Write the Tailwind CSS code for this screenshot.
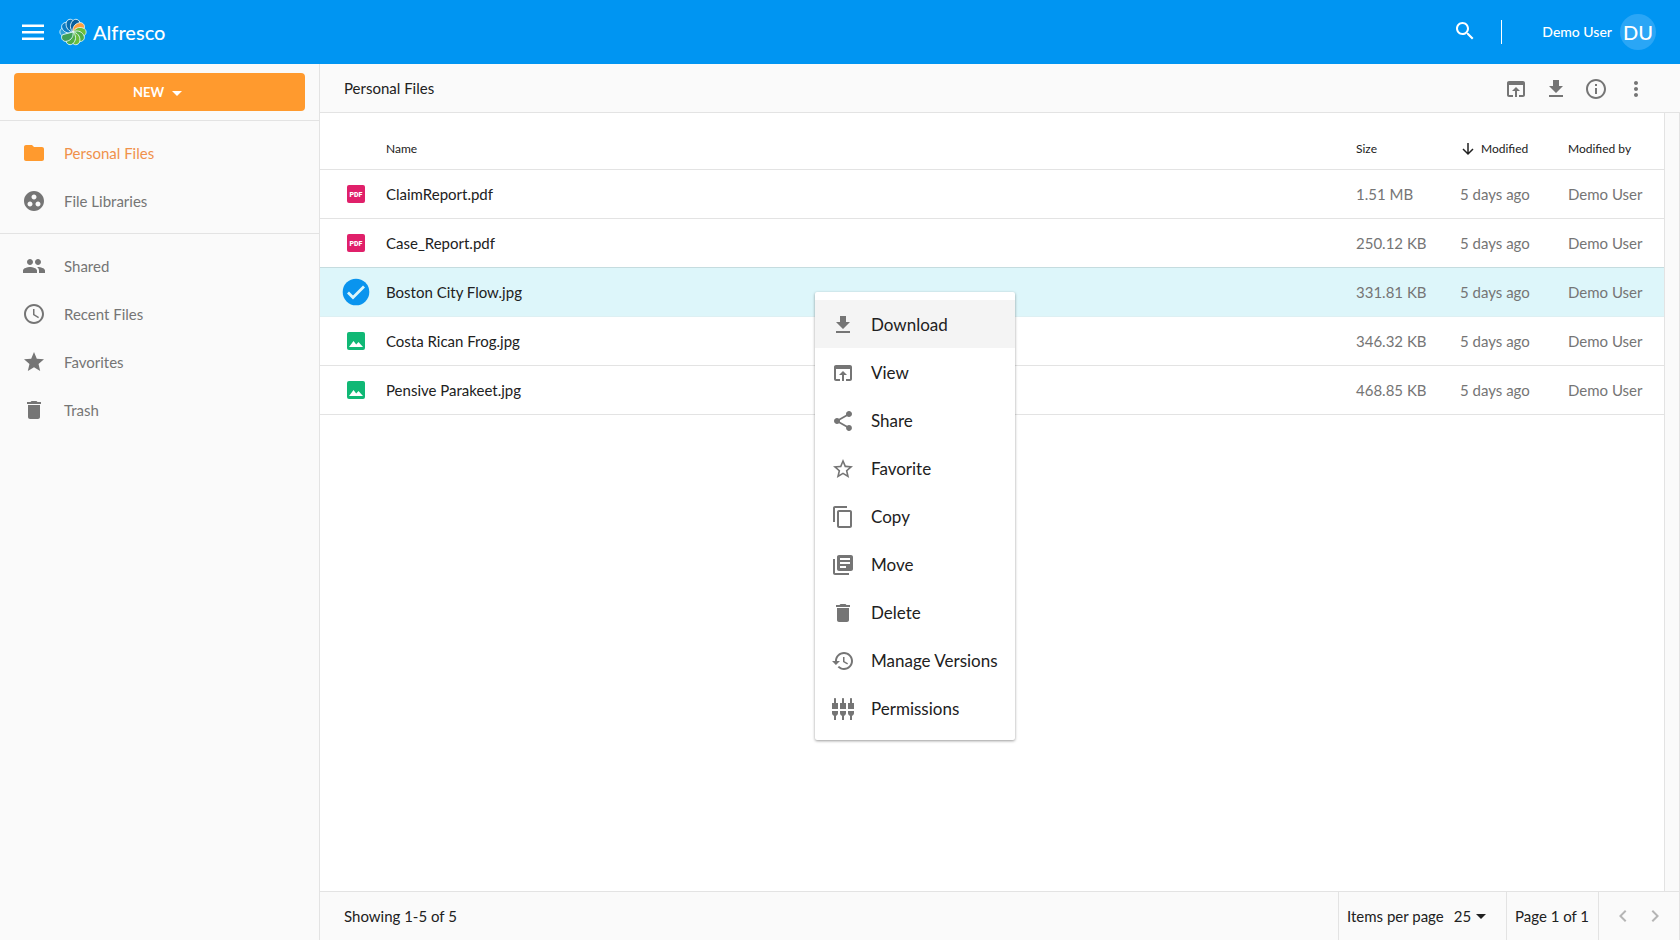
<!DOCTYPE html>
<html lang="en">
<head>
<meta charset="utf-8">
<meta name="viewport" content="width=device-width, initial-scale=1">
<title>Alfresco - Personal Files</title>
<script src="https://cdn.jsdelivr.net/npm/@tailwindcss/browser@4"></script>
</head>
<body class="flex h-screen flex-col overflow-hidden bg-white font-['Lato',sans-serif] text-[15px] text-[#212121]">
<svg class="hidden" aria-hidden="true">
  <symbol id="download" viewBox="0 0 24 24"><path d="M19 9h-4V3H9v6H5l7 7 7-7zM5 18v2h14v-2H5z"/></symbol>
  <symbol id="open" viewBox="0 0 24 24"><path d="M19 4H5c-1.110 0-2 .9-2 2v12c0 1.100.890 2 2 2h4v-2H5V8h14v10h-4v2h4c1.100 0 2-.9 2-2V6c0-1.100-.890-2-2-2zm-7 6l-4 4h3v6h2v-6h3l-4-4z"/></symbol>
  <symbol id="trash" viewBox="0 0 24 24"><path d="M6 19c0 1.100.9 2 2 2h8c1.100 0 2-.9 2-2V7H6v12zM19 4h-3.500l-1-1h-5l-1 1H5v2h14V4z"/></symbol>
  <symbol id="caret" viewBox="0 0 10 5"><path d="M0 0h10L5 5z"/></symbol>
  <symbol id="pdf" viewBox="0 0 24 24"><rect x="3" y="3" width="18" height="18" rx="2" fill="#e0206a"/><text x="12" y="14.500" text-anchor="middle" font-family="Roboto, sans-serif" font-weight="900" font-size="7" fill="#fff">PDF</text></symbol>
  <symbol id="image" viewBox="0 0 24 24"><rect x="3" y="3" width="18" height="18" rx="2" fill="#10b875"/><path fill="#fff" d="M5 18l4.500-6 2.700 3.600L14.500 13 19 18z"/></symbol>
  <path id="petal" d="M0 0C-4-2-5.500-6-4-10C-2.800-14.200 3-14.200 4-10Z"/>
</svg>

<header class="flex h-16 shrink-0 items-center bg-[#0095f2] pr-6 pl-[21px] text-white">
  <button type="button" aria-label="Toggle menu"><svg class="h-6 w-6" viewBox="0 0 24 24" fill="currentColor"><path d="M1 4.500h22v2.600H1zM1 11h22v2.600H1zM1 17.500h22V20H1z"/></svg></button>
  <a href="#" class="ml-[14px] flex items-center gap-[6px] text-[20px] leading-7 font-medium">
    <svg class="h-7 w-7" viewBox="-14 -14 28 28" stroke="#e8fbff" stroke-width=".8" stroke-linejoin="round" aria-hidden="true">
      <use href="#petal" fill="#2d9fd8" transform="rotate(270)"/>
      <use href="#petal" fill="#0a7cc4" transform="rotate(306)"/>
      <use href="#petal" fill="#0a6cae" transform="rotate(342)"/>
      <use href="#petal" fill="#0a5f9c" transform="rotate(18)"/>
      <use href="#petal" fill="#ff9f3f" transform="rotate(54)"/>
      <use href="#petal" fill="#6cbf3a" transform="rotate(90)"/>
      <use href="#petal" fill="#4fae48" transform="rotate(126)"/>
      <use href="#petal" fill="#6cbf3a" transform="rotate(162)"/>
      <use href="#petal" fill="#4fae48" transform="rotate(198)"/>
      <use href="#petal" fill="#3f9f5a" transform="rotate(234)"/>
    </svg>
    <span>Alfresco</span>
  </a>
  <button type="button" aria-label="Search" class="ml-auto pb-0.5"><svg class="h-6 w-6" viewBox="0 0 24 24" fill="currentColor"><path d="M15.500 14h-.790l-.280-.270C15.410 12.590 16 11.110 16 9.500 16 5.910 13.090 3 9.500 3S3 5.910 3 9.500 5.910 16 9.500 16c1.610 0 3.090-.590 4.230-1.570l.270.280v.790l5 4.990L20.490 19l-4.990-5zm-6 0C7.010 14 5 11.990 5 9.500S7.010 5 9.500 5 14 7.010 14 9.500 11.990 14 9.500 14z"/></svg></button>
  <div class="ml-6 h-6 w-px bg-white"></div>
  <button type="button" class="ml-10 flex items-center gap-2"><span class="text-sm font-medium">Demo User</span><span class="flex h-9 w-9 items-center justify-center rounded-full bg-[#2aa6f6] text-[20px] font-medium">DU</span></button>
</header>

<div class="flex min-h-0 flex-1">
  <aside class="w-80 shrink-0 border-r border-[#e3e3e3] bg-[#fafafa] text-[#757575]">
    <div class="border-b border-[#e3e3e3] px-[14px] pt-[9px] pb-[9px]">
      <button type="button" class="flex h-[38px] w-full items-center justify-center gap-2 rounded bg-[#ff9a2e] pt-0.5 pr-1 text-[13px] font-bold text-white">NEW <svg class="h-[5px] w-[10px]" fill="currentColor"><use href="#caret"/></svg></button>
    </div>
    <nav>
      <div class="border-b border-[#e3e3e3] py-2">
        <a href="#" class="flex h-12 items-center gap-[18px] px-[22px] text-[#f0914a]"><svg class="h-6 w-6" viewBox="0 0 24 24" fill="#ff9a2e"><path d="M10 4H4c-1.100 0-1.990.9-1.990 2L2 18c0 1.100.9 2 2 2h16c1.100 0 2-.9 2-2V8c0-1.100-.9-2-2-2h-8l-2-2z"/></svg>Personal Files</a>
        <a href="#" class="flex h-12 items-center gap-[18px] px-[22px]"><svg class="h-6 w-6" viewBox="0 0 24 24" fill="currentColor"><path d="M12 2C6.480 2 2 6.480 2 12s4.480 10 10 10 10-4.480 10-10S17.520 2 12 2zM8 17.500c-1.380 0-2.500-1.120-2.500-2.500s1.120-2.500 2.500-2.500 2.500 1.120 2.500 2.500-1.120 2.500-2.500 2.500zM9.500 8c0-1.380 1.120-2.500 2.500-2.500s2.500 1.120 2.500 2.500-1.120 2.500-2.500 2.500S9.500 9.380 9.500 8zm6.500 9.500c-1.380 0-2.500-1.120-2.500-2.500s1.120-2.500 2.500-2.500 2.500 1.120 2.500 2.500-1.120 2.500-2.500 2.500z"/></svg>File Libraries</a>
      </div>
      <div class="py-2">
        <a href="#" class="flex h-12 items-center gap-[18px] px-[22px]"><svg class="h-6 w-6" viewBox="0 0 24 24" fill="currentColor"><path d="M16 11c1.660 0 2.990-1.340 2.990-3S17.660 5 16 5c-1.660 0-3 1.340-3 3s1.340 3 3 3zm-8 0c1.660 0 2.990-1.340 2.990-3S9.660 5 8 5C6.340 5 5 6.340 5 8s1.340 3 3 3zm0 2c-2.330 0-7 1.170-7 3.500V19h14v-2.500c0-2.330-4.670-3.500-7-3.500zm8 0c-.290 0-.620.020-.970.050 1.160.840 1.970 1.970 1.970 3.450V19h6v-2.500c0-2.330-4.670-3.500-7-3.500z"/></svg>Shared</a>
        <a href="#" class="flex h-12 items-center gap-[18px] px-[22px]"><svg class="h-6 w-6" viewBox="0 0 24 24" fill="currentColor"><path d="M11.990 2C6.470 2 2 6.480 2 12s4.470 10 9.990 10C17.520 22 22 17.520 22 12S17.520 2 11.990 2zM12 20c-4.420 0-8-3.580-8-8s3.580-8 8-8 8 3.580 8 8-3.580 8-8 8zm.5-13H11v6l5.250 3.150.750-1.230-4.500-2.670z"/></svg>Recent Files</a>
        <a href="#" class="flex h-12 items-center gap-[18px] px-[22px]"><svg class="h-6 w-6" viewBox="0 0 24 24" fill="currentColor"><path d="M12 17.270L18.180 21l-1.640-7.030L22 9.240l-7.190-.610L12 2 9.190 8.630 2 9.240l5.460 4.730L5.820 21z"/></svg>Favorites</a>
        <a href="#" class="flex h-12 items-center gap-[18px] px-[22px]"><svg class="h-6 w-6" fill="currentColor"><use href="#trash"/></svg>Trash</a>
      </div>
    </nav>
  </aside>

  <main class="flex min-w-0 flex-1 flex-col">
    <div class="flex h-[49px] shrink-0 items-center border-b border-[#e3e3e3] bg-[#fafafa] pr-8 pl-6">
      <h1 class="mr-auto">Personal Files</h1>
      <div class="flex gap-4 pt-0.5 text-[#757575]">
        <button type="button" aria-label="View"><svg class="h-6 w-6" fill="currentColor"><use href="#open"/></svg></button>
        <button type="button" aria-label="Download"><svg class="h-6 w-6" fill="currentColor"><use href="#download"/></svg></button>
        <button type="button" aria-label="Details"><svg class="h-6 w-6" viewBox="0 0 24 24" fill="currentColor"><path d="M11 17h2v-6h-2v6zm1-15C6.480 2 2 6.480 2 12s4.480 10 10 10 10-4.480 10-10S17.520 2 12 2zm0 18c-4.410 0-8-3.590-8-8s3.590-8 8-8 8 3.590 8 8-3.590 8-8 8zM11 9h2V7h-2v2z"/></svg></button>
        <button type="button" aria-label="More actions"><svg class="h-6 w-6" viewBox="0 0 24 24" fill="currentColor"><path d="M12 8c1.100 0 2-.9 2-2s-.9-2-2-2-2 .9-2 2 .9 2 2 2zm0 2c-1.100 0-2 .9-2 2s.9 2 2 2 2-.9 2-2-.9-2-2-2zm0 6c-1.100 0-2 .9-2 2s.9 2 2 2 2-.9 2-2-.9-2-2-2z"/></svg></button>
      </div>
    </div>

    <div class="flex min-h-0 flex-1 bg-[#fafafa]">
      <div class="min-w-0 flex-1 bg-white">
        <table class="w-full table-fixed border-separate border-spacing-0 text-left">
          <colgroup><col class="w-[66px]"><col><col class="w-[104px]"><col class="w-[108px]"><col class="w-24"></colgroup>
          <thead class="text-xs">
            <tr class="h-[57px] *:border-b *:border-[#e3e3e3] *:pt-4 *:font-normal">
              <th aria-label="Type"></th><th>Name</th><th>Size</th>
              <th aria-sort="descending"><span class="flex items-center gap-[5px]"><svg class="h-4 w-4" viewBox="0 0 16 16" fill="none" stroke="currentColor" stroke-width="1.500"><path d="M8 2v11M3 8l5 5 5-5"/></svg>Modified</span></th>
              <th>Modified by</th>
            </tr>
          </thead>
          <tbody class="text-[#757575]">
            <tr class="h-[49px] *:border-b *:border-[#e3e3e3]"><td class="pl-6"><svg class="h-6 w-6"><use href="#pdf"/></svg></td><td class="text-[#212121]">ClaimReport.pdf</td><td>1.51 MB</td><td>5 days ago</td><td>Demo User</td></tr>
            <tr class="h-[49px] *:border-b *:border-[#c5dcdf]"><td class="pl-6"><svg class="h-6 w-6"><use href="#pdf"/></svg></td><td class="text-[#212121]">Case_Report.pdf</td><td>250.12 KB</td><td>5 days ago</td><td>Demo User</td></tr>
            <tr class="h-[49px] bg-[#ddf6fa] *:border-b *:border-[#ddf0f3]" aria-selected="true"><td class="pl-[22px]"><svg class="h-7 w-7" viewBox="0 0 28 28"><circle cx="14" cy="14" r="13.300" fill="#0a94ee"/><path d="M6 14.500l5 5L22 8.500" fill="none" stroke="#ddf6fa" stroke-width="2.800"/></svg></td><td class="text-[#212121]">Boston City Flow.jpg</td><td>331.81 KB</td><td>5 days ago</td><td>Demo User</td></tr>
            <tr class="h-[49px] *:border-b *:border-[#e3e3e3]"><td class="pl-6"><svg class="h-6 w-6"><use href="#image"/></svg></td><td class="text-[#212121]">Costa Rican Frog.jpg</td><td>346.32 KB</td><td>5 days ago</td><td>Demo User</td></tr>
            <tr class="h-[49px] *:border-b *:border-[#e3e3e3]"><td class="pl-6"><svg class="h-6 w-6"><use href="#image"/></svg></td><td class="text-[#212121]">Pensive Parakeet.jpg</td><td>468.85 KB</td><td>5 days ago</td><td>Demo User</td></tr>
          </tbody>
        </table>
      </div>
      <div class="w-4 border-x border-[#e3e3e3]"></div>
    </div>

    <footer class="flex h-[49px] shrink-0 items-stretch border-t border-r border-[#e3e3e3] bg-[#fafafa]">
      <div class="mr-auto flex items-center pl-6">Showing 1-5 of 5</div>
      <div class="flex w-[168px] items-center border-l border-[#e3e3e3] pl-2">
        <label for="page-size">Items per page</label>
        <div class="ml-[10px] grid items-center">
          <select id="page-size" class="col-start-1 row-start-1 w-8 appearance-none bg-transparent"><option>25</option><option>50</option><option>100</option></select>
          <svg class="pointer-events-none col-start-1 row-start-1 h-[5px] w-[10px] justify-self-end" fill="currentColor"><use href="#caret"/></svg>
        </div>
      </div>
      <div class="flex w-[92px] items-center border-l border-[#e3e3e3] pl-2">Page 1 of 1</div>
      <div class="flex w-[81px] items-center gap-2 border-l border-[#e3e3e3] pl-3 text-[#b5b5b5]">
        <button type="button" disabled aria-label="Previous page"><svg class="h-6 w-6" viewBox="0 0 24 24" fill="currentColor"><path d="M15.410 7.410L14 6l-6 6 6 6 1.410-1.410L10.830 12z"/></svg></button>
        <button type="button" disabled aria-label="Next page"><svg class="h-6 w-6" viewBox="0 0 24 24" fill="currentColor"><path d="M10 6L8.590 7.410 13.170 12l-4.580 4.590L10 18l6-6z"/></svg></button>
      </div>
    </footer>
  </main>
</div>

<div role="menu" class="absolute top-[292px] left-[815px] w-[200px] rounded-xs bg-white py-2 text-[17px] shadow-[0_1px_3px_rgba(0,0,0,0.4)] *:flex *:h-12 *:w-full *:items-center *:gap-4 *:pt-0.5 *:pl-4">
  <button type="button" role="menuitem" class="bg-[#f4f4f4]"><svg class="h-6 w-6" fill="#757575"><use href="#download"/></svg>Download</button>
  <button type="button" role="menuitem"><svg class="h-6 w-6" fill="#757575"><use href="#open"/></svg>View</button>
  <button type="button" role="menuitem"><svg class="h-6 w-6" viewBox="0 0 24 24" fill="#757575"><path d="M18 16.080c-.760 0-1.440.3-1.960.770L8.910 12.700c.050-.230.090-.460.090-.7s-.040-.470-.090-.7l7.050-4.110c.540.5 1.250.810 2.040.810 1.660 0 3-1.340 3-3s-1.340-3-3-3-3 1.340-3 3c0 .240.040.470.090.7L8.040 9.810C7.500 9.310 6.790 9 6 9c-1.660 0-3 1.340-3 3s1.340 3 3 3c.790 0 1.500-.310 2.040-.810l7.120 4.160c-.050.210-.080.430-.080.650 0 1.610 1.310 2.920 2.920 2.920s2.920-1.310 2.920-2.920-1.310-2.920-2.920-2.920z"/></svg>Share</button>
  <button type="button" role="menuitem"><svg class="h-6 w-6" viewBox="0 0 24 24" fill="#757575"><path d="M22 9.240l-7.190-.620L12 2 9.190 8.630 2 9.240l5.460 4.730L5.820 21 12 17.270 18.180 21l-1.630-7.030L22 9.240zM12 15.400l-3.760 2.270 1-4.280-3.320-2.880 4.380-.380L12 6.100l1.710 4.040 4.380.380-3.320 2.880 1 4.280L12 15.400z"/></svg>Favorite</button>
  <button type="button" role="menuitem"><svg class="h-6 w-6" viewBox="0 0 24 24" fill="#757575"><path d="M16 1H4c-1.100 0-2 .9-2 2v14h2V3h12V1zm3 4H8c-1.100 0-2 .9-2 2v14c0 1.100.9 2 2 2h11c1.100 0 2-.9 2-2V7c0-1.100-.9-2-2-2zm0 16H8V7h11v14z"/></svg>Copy</button>
  <button type="button" role="menuitem"><svg class="h-6 w-6" viewBox="0 0 24 24" fill="#757575"><path d="M4 6H2v14c0 1.100.9 2 2 2h14v-2H4V6zm16-4H8c-1.100 0-2 .9-2 2v12c0 1.100.9 2 2 2h12c1.100 0 2-.9 2-2V4c0-1.100-.9-2-2-2zm-1 9H9V9h10v2zm-4 4H9v-2h6v2zm4-8H9V5h10v2z"/></svg>Move</button>
  <button type="button" role="menuitem"><svg class="h-6 w-6" fill="#757575"><use href="#trash"/></svg>Delete</button>
  <button type="button" role="menuitem"><svg class="h-6 w-6" viewBox="0 0 24 24" fill="#757575"><path d="M13 3c-4.970 0-9 4.030-9 9H1l3.890 3.890.070.140L9 12H6c0-3.870 3.130-7 7-7s7 3.130 7 7-3.130 7-7 7c-1.930 0-3.680-.790-4.940-2.060l-1.420 1.420C8.270 19.990 10.510 21 13 21c4.970 0 9-4.030 9-9s-4.030-9-9-9zm-1 5v5l4.280 2.540.720-1.210-3.500-2.080V8H12z"/></svg>Manage Versions</button>
  <button type="button" role="menuitem"><svg class="h-6 w-6" viewBox="0 0 24 24" fill="#757575"><path d="M5 2c0-.550-.450-1-1-1s-1 .450-1 1v4H1v6h6V6H5V2zm4 14c0 1.300.840 2.400 2 2.820V23h2v-4.180c1.160-.410 2-1.510 2-2.820v-2H9v2zm-8 0c0 1.300.840 2.400 2 2.820V23h2v-4.180C6.160 18.400 7 17.300 7 16v-2H1v2zM21 6V2c0-.550-.450-1-1-1s-1 .450-1 1v4h-2v6h6V6h-2zm-8-4c0-.550-.450-1-1-1s-1 .450-1 1v4H9v6h6V6h-2V2zm4 14c0 1.300.840 2.400 2 2.820V23h2v-4.180c1.160-.410 2-1.510 2-2.820v-2h-6v2z"/></svg>Permissions</button>
</div>
</body>
</html>
